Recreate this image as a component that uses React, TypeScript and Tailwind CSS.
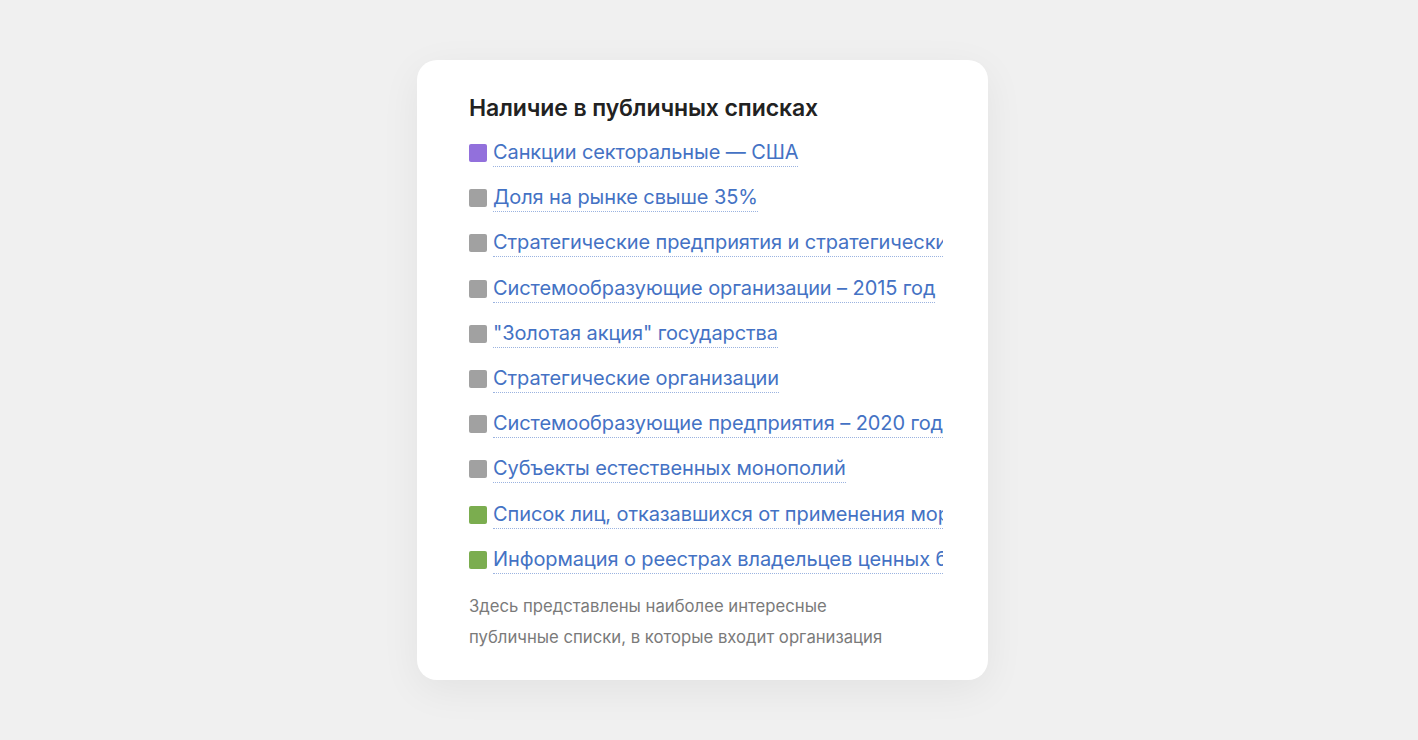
import React from "react";

const items: { label: string; color: string }[] = [
  { label: "Санкции секторальные — США", color: "bg-[#9270dc]" },
  { label: "Доля на рынке свыше 35%", color: "bg-[#a1a1a1]" },
  { label: "Стратегические предприятия и стратегические акционерные общества", color: "bg-[#a1a1a1]" },
  { label: "Системообразующие организации – 2015 год", color: "bg-[#a1a1a1]" },
  { label: "\"Золотая акция\" государства", color: "bg-[#a1a1a1]" },
  { label: "Стратегические организации", color: "bg-[#a1a1a1]" },
  { label: "Системообразующие предприятия – 2020 год", color: "bg-[#a1a1a1]" },
  { label: "Субъекты естественных монополий", color: "bg-[#a1a1a1]" },
  { label: "Список лиц, отказавшихся от применения моратория на банкротство", color: "bg-[#7bad4f]" },
  { label: "Информация о реестрах владельцев ценных бумаг", color: "bg-[#7bad4f]" },
];

export default function App() {
  return (
    <div
      className="w-[1418px] h-[740px] bg-[#f0f0f0] flex pl-[417px] pt-[60px]"
      style={{ fontFamily: "Inter, 'Noto Sans', sans-serif" }}
    >
      <div className="w-[571px] h-[620px] bg-white rounded-[20px] shadow-[0_10px_40px_rgba(0,0,0,0.06)] pl-[52px] pr-[45px] pt-[33px]">
        <h2 className="text-[23px] leading-[30px] font-semibold text-[#222] tracking-[-0.1px]">
          Наличие в публичных списках
        </h2>
        <ul className="mt-[12px] flex flex-col">
          {items.map((it) => (
            <li key={it.label} className="h-[45.2px] flex items-start pt-[4px] overflow-hidden">
              <span className={`w-[18px] h-[18px] rounded-[2px] shrink-0 mt-[5px] ${it.color}`} />
              <span className="ml-[6px] text-[20px] leading-[27px] text-[#4472c4] whitespace-nowrap border-b border-dotted border-[#9bb3e0] tracking-[-0.1px]">
                {it.label}
              </span>
            </li>
          ))}
        </ul>
        <p className="mt-[4px] text-[16.7px] leading-[31px] text-[#7a7a7a] w-[430px]">
          Здесь представлены наиболее интересные публичные списки, в которые входит организация
        </p>
      </div>
    </div>
  );
}
